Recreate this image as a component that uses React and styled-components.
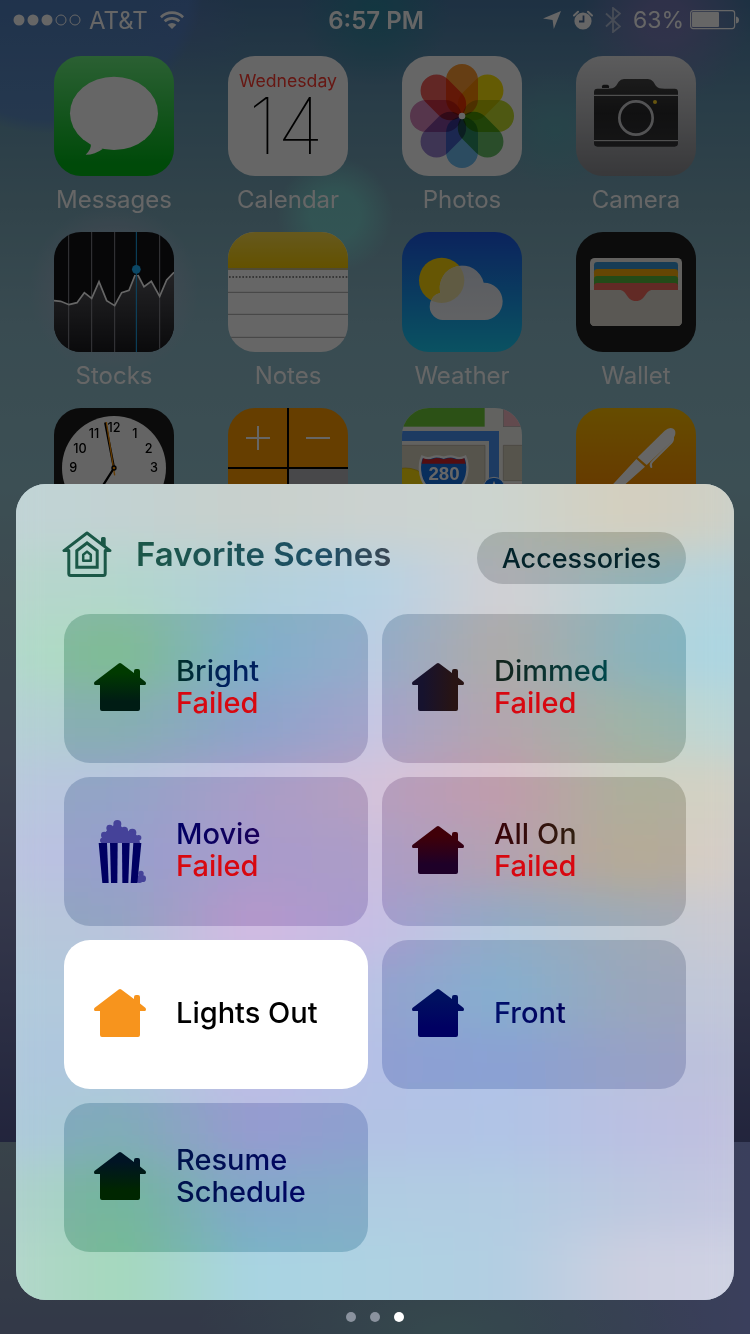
import styled, { createGlobalStyle, css } from "styled-components";

const scenes = [
  {
    name: "Bright",
    failed: true,
    ink: "linear-gradient(90deg, #003028, #00205e 60%)",
    from: "#003a00",
    to: "#001c14",
  },
  {
    name: "Dimmed",
    failed: true,
    ink: "linear-gradient(90deg, #14221a, #00484c)",
    from: "#16122e",
    to: "#281414",
    across: true,
  },
  {
    name: "Movie",
    failed: true,
    icon: "popcorn",
    ink: "linear-gradient(90deg, #000064, #1a005a)",
  },
  {
    name: "All On",
    failed: true,
    ink: "linear-gradient(90deg, #380008, #302010)",
    from: "#400008",
    to: "#1e0028",
  },
  { name: "Lights Out", active: true, from: "#f7941d", to: "#f7941d" },
  {
    name: "Front",
    ink: "linear-gradient(90deg, #00106c, #00005a)",
    from: "#001060",
    to: "#000062",
  },
  {
    name: "Resume Schedule",
    ink: "linear-gradient(90deg, #00144c, #00006a)",
    from: "#001424",
    to: "#002600",
  },
];

// soft colours behind the sheet, one horizontal gradient per line
const glow = [
  "#c0d4d6, #c2d2d2, #c8d0cc, #cbd2d0, #ccd4cf, #d4cfbe, #ccd0c8",
  "#b8d6cc, #b2d6cc, #b2d0da, #b6d2e4, #d2d0d4, #bcd4d8, #b0d4e0",
  "#b0d8cc, #aedcbc, #acd0e4, #bccde4, #d2cecc, #b6d4da, #a8d6e4",
  "#b4d0d4, #b0cfd0, #b2c4e2, #c6c6e4, #d4c8ce, #c6d6cc, #b8d6d8",
  "#b8c8dc, #b8c4e0, #c8bfe0, #d4c2da, #dcc0cc, #d0d2c2, #d4d0c4",
  "#bac2e0, #bac0e2, #c8bee2, #cbbfdf, #d2c4d0, #d6cebe, #d4ccc8",
  "#b6c8da, #b8c4dc, #d2bae2, #c6bee4, #b8cce0, #c2ccd6, #ccc8d0",
  "#b0cadc, #b4c8dc, #c4bce2, #b8c2e4, #b0d0e8, #bec8d8, #c2c6d8",
  "#aec8dc, #aec6de, #bebce4, #b4c0e6, #b0c2e8, #bac2de, #bec0da",
  "#acc8dc, #aaccd4, #b8bce4, #b2c2e4, #b0c4e6, #bac0e2, #c2c0de",
  "#aed0cc, #a2d4c0, #acc8e2, #b0cce2, #b2cce2, #bcc8e0, #c6c6e0",
  "#b4d6cc, #a4d8bc, #a8d4e2, #aed2e2, #b2cee2, #cccfe0, #d0d2e4",
];

export default function App() {
  return (
    <>
      <GlobalStyle />
      <Screen>
        <Home>
          <StatusBar />
          <AppGrid>
            {apps.map(({ label, hideLabel, Icon }) => (
              <AppLink key={label} href="#" aria-label={label}>
                <AppTile>
                  <Icon />
                </AppTile>
                {!hideLabel && <AppLabel>{label}</AppLabel>}
              </AppLink>
            ))}
          </AppGrid>
          <Dock />
        </Home>
        <Overlay>
          <Sheet>
            <Glow>
              {glow.map((colors) => (
                <GlowLine key={colors} $colors={colors} />
              ))}
            </Glow>
            <SheetHeader>
              <SheetTitle>
                <HomeKitIcon />
                <TitleText>Favorite Scenes</TitleText>
              </SheetTitle>
              <Pill type="button">Accessories</Pill>
            </SheetHeader>
            <SceneGrid>
              {scenes.map((scene, i) => (
                <Scene key={scene.name} scene={scene} id={"scene" + i} />
              ))}
            </SceneGrid>
          </Sheet>
          <Pager>
            <PageDot />
            <PageDot />
            <PageDot $current />
          </Pager>
        </Overlay>
      </Screen>
    </>
  );
}

function Scene({ scene, id }) {
  return (
    <SceneButton type="button" $active={scene.active}>
      <SceneIcon>
        {scene.icon === "popcorn" ? (
          <Popcorn />
        ) : (
          <House id={id} from={scene.from} to={scene.to} across={scene.across} />
        )}
      </SceneIcon>
      <SceneText>
        <SceneName $ink={scene.ink}>{scene.name}</SceneName>
        {scene.failed && <SceneError>Failed</SceneError>}
      </SceneText>
    </SceneButton>
  );
}

function House({ id, from, to, across }) {
  return (
    <svg width="52" height="48" viewBox="0 0 52 48">
      <defs>
        <linearGradient id={id} x1="0" y1="0" x2={across ? 1 : 0} y2={across ? 0 : 1}>
          <stop offset="0.2" stopColor={from} />
          <stop offset="0.8" stopColor={to} />
        </linearGradient>
      </defs>
      <path
        fill={`url(#${id})`}
        d="M24.7.6Q26-.4 27.3.6L40 10V8a2 2 0 0 1 2-2h2a2 2 0 0 1 2 2v6.6l5.3 4.2Q52 19.5 52 20.5 52 22 50.5 22H46v24a2 2 0 0 1-2 2H8a2 2 0 0 1-2-2V22H1.5Q0 22 0 20.5 0 19.5.7 18.8Z"
      />
    </svg>
  );
}

function Popcorn() {
  return (
    <svg width="52" height="66" viewBox="102 144 156 198">
      <g fill="#454299">
        <circle cx="172" cy="165" r="12" />
        <circle cx="149" cy="177" r="10" />
        <circle cx="193" cy="184" r="11" />
        <circle cx="217" cy="191" r="12" />
        <circle cx="133" cy="198" r="10" />
        <circle cx="236" cy="206" r="8" />
        <circle cx="128" cy="214" r="8" />
        <path d="M124 222V208l18-26 20-14h18l14 16 26 6 16 14 4 18Z" />
        <circle cx="243" cy="313" r="8" />
        <circle cx="248" cy="329" r="10" />
        <circle cx="238" cy="331" r="11" />
        <path d="M236 316h14v18h-18Z" />
      </g>
      <g fill="#000062">
        <path d="M116 222h25l5 120h-19Z" />
        <path d="M150 222h23l-1 120h-19Z" />
        <path d="M186 222h23l-4 120h-18Z" />
        <path d="M220 222h24l-12 120h-20Z" />
      </g>
    </svg>
  );
}

function HomeKitIcon() {
  return (
    <svg width="50" height="46" viewBox="0 0 50 46" fill="none" stroke="#1b5847" strokeLinejoin="round">
      <path strokeWidth="3" d="M25 2 2 19.6h4.8v22.9a2 2 0 0 0 2 2h32.4a2 2 0 0 0 2-2V19.6H48Z" />
      <path strokeWidth="0" fill="#1b5847" d="M39 12V7.5A1.5 1.5 0 0 1 40.500 6h1.700A1.500 1.500 0 0 1 43.700 7.500V17Z" />
      <path strokeWidth="3" strokeLinejoin="miter" d="M25 12 14.800 19.800v16.500h20.400V19.800Z" />
      <path strokeWidth="2.500" d="M25 20.600 21.200 23.800v6h7.600v-6Z" />
    </svg>
  );
}

function StatusBar() {
  return (
    <Status>
      <StatusSide>
        <svg width="68" height="12" viewBox="0 0 68 12" fill="#fff">
          <circle cx="6" cy="6" r="5.500" />
          <circle cx="20" cy="6" r="5.500" />
          <circle cx="34" cy="6" r="5.500" />
          <circle cx="48" cy="6" r="5" fill="none" stroke="#fff" />
          <circle cx="62" cy="6" r="5" fill="none" stroke="#fff" />
        </svg>
        <Carrier>AT&amp;T</Carrier>
        <svg width="24" height="18" viewBox="0 0 24 18" fill="none" stroke="#fff" strokeWidth="2.700">
          <path d="M.9 6.200a16 16 0 0 1 22.200 0" />
          <path d="M4.700 10.200a10.600 10.600 0 0 1 14.600 0" />
          <path stroke="none" fill="#fff" d="m12 18-4.300-4.300a6.200 6.200 0 0 1 8.600 0Z" />
        </svg>
      </StatusSide>
      <Time>6:57 PM</Time>
      <StatusSide $end>
        <svg width="18" height="18" viewBox="0 0 18 18" fill="#fff">
          <path d="M18 0 10.800 18 9.600 9 0 7.600Z" />
        </svg>
        <svg width="20" height="20" viewBox="0 0 20 20">
          <circle cx="10" cy="11" r="8.600" fill="#fff" />
          <path d="M1 5.500 5 1.800M19 5.500 15 1.800" stroke="#fff" strokeWidth="2" strokeLinecap="round" />
          <path d="M10.500 5.500v6H6" fill="none" stroke="#4a6c98" strokeWidth="1.800" />
        </svg>
        <svg width="16" height="26" viewBox="0 0 16 26" fill="none" stroke="#fff" strokeOpacity="0.5" strokeWidth="1.800">
          <path d="M1 6.500 15 19.500 8 25V1l7 5.500L1 19.500" />
        </svg>
        <Charge>
          63%
          <svg width="49" height="20" viewBox="0 0 49 20">
            <rect x="0.600" y="0.600" width="44" height="18" rx="2.500" fill="none" stroke="#fff" strokeWidth="1.200" />
            <rect x="2" y="2" width="27" height="15" rx="1" fill="#fff" />
            <path d="M46 6.500q3 .5 3 3.500t-3 3.500Z" fill="#fff" />
          </svg>
        </Charge>
      </StatusSide>
    </Status>
  );
}

/* app icons, all drawn on a 360 unit square */

function Messages() {
  return (
    <Art viewBox="0 0 360 360">
      <defs>
        <linearGradient id="messages" x2="0" y2="1">
          <stop offset="0" stopColor="#6cf080" />
          <stop offset="0.9" stopColor="#00b818" />
        </linearGradient>
      </defs>
      <rect width="360" height="360" fill="url(#messages)" />
      <ellipse cx="180" cy="172" rx="132" ry="110" fill="#fff" />
      <path d="M110 262q4 16-15 34 28 0 52-18Z" fill="#fff" />
    </Art>
  );
}

function Calendar() {
  return (
    <Art viewBox="0 0 360 360">
      <rect width="360" height="360" fill="#fff" />
      <ArtText x="180" y="94" $size={53} fill="#ff3b30">
        Wednesday
      </ArtText>
      <ArtText x="174" y="294" $size={234} $weight={100} fill="#000">
        14
      </ArtText>
    </Art>
  );
}

function Photos() {
  const petals = [
    "#ff9c33",
    "#fbe30c",
    "#c3dc2f",
    "#69c06a",
    "#6fbdf2",
    "#9c86d2",
    "#d687bd",
    "#f5615e",
  ];
  return (
    <Art viewBox="0 0 360 360">
      <rect width="360" height="360" fill="#fff" />
      {petals.map((color, i) => (
        <Petal
          key={color}
          x="132"
          y="24"
          width="96"
          height="154"
          rx="48"
          fill={color}
          transform={`rotate(${i * 45} 180 180)`}
        />
      ))}
      <circle cx="180" cy="180" r="10" fill="#fff" />
    </Art>
  );
}

function Camera() {
  return (
    <Art viewBox="0 0 360 360">
      <defs>
        <linearGradient id="camera" x2="0" y2="1">
          <stop offset="0" stopColor="#e6e6e8" />
          <stop offset="1" stopColor="#8c8d92" />
        </linearGradient>
        <linearGradient id="cameraBody" x2="0" y2="1">
          <stop offset="0" stopColor="#444" />
          <stop offset="0.500" stopColor="#2a2a2c" />
          <stop offset="1" stopColor="#363638" />
        </linearGradient>
      </defs>
      <rect width="360" height="360" fill="url(#camera)" />
      <path d="M78 96v-5q0-5 5-5h11q5 0 5 5v5Z" fill="#2c2c2e" />
      <path
        fill="url(#cameraBody)"
        d="M54 262V108q0-10 10-10h30c26 0 27-11 34-21q6-8 16-8h72q10 0 16 8c7 10 8 21 34 21h30q10 0 10 10v154q0 10-10 10H64q-10 0-10-10Z"
      />
      <path d="M54 118h252M54 254h252" stroke="#e4e4e4" strokeWidth="3" />
      <circle cx="180" cy="186" r="50" fill="none" stroke="#cfcfd3" strokeWidth="8" />
      <circle cx="237" cy="138" r="6" fill="#ffd426" />
    </Art>
  );
}

function Stocks() {
  return (
    <Art viewBox="0 0 360 360">
      <defs>
        <linearGradient id="stocks" x2="0" y2="1">
          <stop offset="0" stopColor="#5a5a60" />
          <stop offset="1" stopColor="#1a1a1e" />
        </linearGradient>
      </defs>
      <rect width="360" height="360" fill="#121216" />
      <path
        fill="url(#stocks)"
        d="M0 206l20 2 25 10 24-6 22-30 22 17 22-50 23 57 24 15 21-39 22-7 22-55 23 44 22-16 25 45 21-49 22-23v239H0Z"
      />
      <path d="M44 0v360M113 0v360M182 0v360M317 0v360" stroke="#8e8e96" strokeWidth="3" />
      <path
        fill="none"
        stroke="#fff"
        strokeWidth="5"
        d="M0 206l20 2 25 10 24-6 22-30 22 17 22-50 23 57 24 15 21-39 22-7 22-55 23 44 22-16 25 45 21-49 22-23"
      />
      <circle cx="247" cy="112" r="18" fill="#121216" />
      <path d="M247 0v360" stroke="#1eb4ff" strokeWidth="3" />
      <circle cx="247" cy="112" r="13" fill="#1eb4ff" />
    </Art>
  );
}

function Notes() {
  return (
    <Art viewBox="0 0 360 360">
      <defs>
        <linearGradient id="notes" x2="0" y2="1">
          <stop offset="0" stopColor="#ffde4c" />
          <stop offset="1" stopColor="#f8cb00" />
        </linearGradient>
      </defs>
      <rect width="360" height="360" fill="#fff" />
      <rect width="360" height="108" fill="url(#notes)" />
      <path d="M0 111h360" stroke="#b5a056" strokeWidth="5" />
      <path d="M3 135h357" stroke="#8a8a8a" strokeWidth="6" strokeDasharray="5 5" />
      <path d="M0 181h360M0 247h360M0 316h360" stroke="#a4a4a4" strokeWidth="3" />
    </Art>
  );
}

function Weather() {
  return (
    <Art viewBox="0 0 360 360">
      <defs>
        <linearGradient id="weather" x2="0" y2="1">
          <stop offset="0" stopColor="#1d58e8" />
          <stop offset="1" stopColor="#19cdf4" />
        </linearGradient>
        <linearGradient id="cloud" x2="0" y2="1">
          <stop offset="0" stopColor="#d4dcec" />
          <stop offset="1" stopColor="#fff" />
        </linearGradient>
        <clipPath id="cloudShape">
          <path d="M122 264a41 41 0 0 1-7-81 66 66 0 0 1 130-31 56 56 0 0 1 2 112Z" />
        </clipPath>
      </defs>
      <rect width="360" height="360" fill="url(#weather)" />
      <circle cx="119" cy="145" r="68" fill="#ffd80c" />
      <g clipPath="url(#cloudShape)">
        <rect width="360" height="360" fill="url(#cloud)" />
        <circle cx="119" cy="145" r="68" fill="#f0e4a8" />
      </g>
    </Art>
  );
}

function Wallet() {
  return (
    <Art viewBox="0 0 360 360">
      <rect width="360" height="360" fill="#1e1e1e" />
      <rect x="42" y="78" width="276" height="204" rx="14" fill="#f4f2ee" />
      <rect x="54" y="90" width="252" height="60" rx="10" fill="#3a97d4" />
      <rect x="54" y="111" width="252" height="60" rx="10" fill="#fdae0c" />
      <rect x="54" y="132" width="252" height="60" rx="10" fill="#57bb3c" />
      <rect x="54" y="153" width="252" height="60" rx="10" fill="#f4695e" />
      <path
        fill="#e0dbd3"
        d="M42 174h88c24 0 20 33 50 33s26-33 50-33h88v94q0 14-14 14H56q-14 0-14-14Z"
      />
    </Art>
  );
}

function Clock() {
  return (
    <Art viewBox="0 0 360 360">
      <rect width="360" height="360" fill="#1c1c1c" />
      <circle cx="180" cy="180" r="156" fill="#fafafa" />
      <g fill="#000">
        <ArtText x="180" y="72" $size={38} $weight={500}>12</ArtText>
        <ArtText x="243" y="90" $size={38} $weight={500}>1</ArtText>
        <ArtText x="284" y="135" $size={38} $weight={500}>2</ArtText>
        <ArtText x="300" y="192" $size={38} $weight={500}>3</ArtText>
        <ArtText x="58" y="192" $size={38} $weight={500}>9</ArtText>
        <ArtText x="78" y="135" $size={38} $weight={500}>10</ArtText>
        <ArtText x="120" y="90" $size={38} $weight={500}>11</ArtText>
      </g>
      <path d="M180 180 154 46" stroke="#000" strokeWidth="7" strokeLinecap="round" />
      <path d="M180 180 128 262" stroke="#000" strokeWidth="7" strokeLinecap="round" />
      <path d="M182 202 157 42" stroke="#ff9500" strokeWidth="4" />
      <circle cx="180" cy="180" r="8" fill="#000" />
      <circle cx="180" cy="180" r="4" fill="#ff9500" />
    </Art>
  );
}

function Calculator() {
  return (
    <Art viewBox="0 0 360 360">
      <rect width="360" height="360" fill="#ff9b00" />
      <rect x="180" y="180" width="180" height="180" fill="#b4b5b9" />
      <path d="M180 0v360M0 180h360" stroke="#000" strokeWidth="6" />
      <path d="M54 90h72M90 54v72M234 90h72" stroke="#fff" strokeWidth="6" />
    </Art>
  );
}

function Maps() {
  return (
    <Art viewBox="0 0 360 360">
      <rect width="360" height="360" fill="#f6f5f1" />
      <rect width="248" height="56" fill="#6ecb38" />
      <rect x="304" width="56" height="56" fill="#f4b9c4" stroke="#b4aeae" strokeWidth="2" />
      <path d="M-4 112h253v260H-4Z" fill="#d8d1bd" stroke="#aaa494" strokeWidth="2" />
      <path d="M304 112h60v106h-60Z" fill="#d8d1bd" stroke="#aaa494" strokeWidth="2" />
      <rect x="304" y="226" width="60" height="140" fill="#f2d6d4" />
      <circle cx="10" cy="270" r="90" fill="#ffde0c" stroke="#d4b000" strokeWidth="2" />
      <path d="M0 84h276v276" fill="none" stroke="#4a94f6" strokeWidth="30" />
      <path
        fill="#1473e6"
        stroke="#fff"
        strokeWidth="7"
        d="M60 146q16 8 33 1 10-5 32 2 22-7 32-2 17 7 33-1 8 18 6 42-4 56-71 80-67-24-71-80-2-24 6-42Z"
      />
      <path d="M63 151q16 6 31 1 10-5 31 2 21-7 31-2 15 5 31-1l4 16H59Z" fill="#d0252c" />
      <MapNumber x="126" y="216" fill="#fff">280</MapNumber>
      <circle cx="276" cy="241" r="33" fill="#1473e6" stroke="#fff" strokeWidth="3" />
      <path d="m276 218 16 40-16-8-16 8Z" fill="#fff" />
    </Art>
  );
}

function Pages() {
  return (
    <Art viewBox="0 0 360 360">
      <defs>
        <linearGradient id="pages" x2="0" y2="1">
          <stop offset="0" stopColor="#ffbf00" />
          <stop offset="0.700" stopColor="#ff9000" />
        </linearGradient>
      </defs>
      <rect width="360" height="360" fill="url(#pages)" />
      <path d="M266 68q14-12 26-6 10 7 4 22l-10 17-74 70-27-23Z" fill="#fff" />
      <path d="M181 153 207 176 142 234 90 284 60 292 106 234Z" fill="#fff" />
      <path
        d="M290 84q4 12-5 21l-56 56q-8 8-3 16"
        fill="none"
        stroke="#fff"
        strokeWidth="6"
        strokeLinecap="round"
      />
    </Art>
  );
}

const apps = [
  { label: "Messages", Icon: Messages },
  { label: "Calendar", Icon: Calendar },
  { label: "Photos", Icon: Photos },
  { label: "Camera", Icon: Camera },
  { label: "Stocks", Icon: Stocks },
  { label: "Notes", Icon: Notes },
  { label: "Weather", Icon: Weather },
  { label: "Wallet", Icon: Wallet },
  { label: "Clock", hideLabel: true, Icon: Clock },
  { label: "Calculator", hideLabel: true, Icon: Calculator },
  { label: "Maps", hideLabel: true, Icon: Maps },
  { label: "Pages", hideLabel: true, Icon: Pages },
];

const GlobalStyle = createGlobalStyle`
  * {
    box-sizing: border-box;
  }

  body {
    margin: 0;
    font-family: Inter, "Liberation Sans", sans-serif;
  }

  button {
    font-family: inherit;
    border: 0;
    padding: 0;
    cursor: pointer;
  }

  svg {
    display: block;
    flex-shrink: 0;
  }
`;

const Screen = styled.main`
  display: grid;
  min-height: 100vh;
`;

const Home = styled.section`
  grid-area: 1 / 1;
  position: relative;
  display: flex;
  flex-direction: column;
  background:
    radial-gradient(circle at 50px -20px, rgba(84, 130, 205, 0.6) 140px, transparent 154px),
    radial-gradient(circle at 190px 20px, rgba(96, 120, 190, 0.4), transparent 60px),
    radial-gradient(circle at 375px 10px, rgba(40, 140, 160, 0.8), transparent 75px),
    radial-gradient(circle at 665px 20px, rgba(136, 124, 190, 0.7) 20px, transparent 85px),
    radial-gradient(circle at 555px 130px, rgba(90, 180, 185, 0.6), transparent 60px),
    radial-gradient(circle at 335px 215px, rgba(125, 240, 225, 0.55) 25px, transparent 58px),
    radial-gradient(circle at 114px 290px, rgba(180, 185, 210, 0.4) 60px, transparent 85px),
    linear-gradient(
      #4b7aa6 0,
      #689ab4 110px,
      #7ba8b9 200px,
      #8fbccb 330px,
      #96c6d2 480px,
      #98b8c8 600px,
      #96a8c8 760px,
      #8088b8 920px,
      #565c98 1140px
    );

  &::after {
    content: "";
    position: absolute;
    inset: 0;
    background: rgba(0, 0, 0, 0.6);
  }
`;

const Status = styled.header`
  display: grid;
  grid-template-columns: 1fr auto 1fr;
  align-items: center;
  height: 40px;
  padding: 0 11px 0 13px;
  color: #fff;
  font-size: 24px;
`;

const StatusSide = styled.div`
  display: flex;
  align-items: center;
  justify-content: ${({ $end }) => ($end ? "flex-end" : "flex-start")};
  gap: ${({ $end }) => ($end ? "12px" : "8px")};
`;

const Carrier = styled.span`
  padding-right: 4px;
`;

const Charge = styled.span`
  display: flex;
  align-items: center;
  gap: 6px;
  font-size: 23px;
`;

const Time = styled.time`
  font-weight: 600;
`;

const AppGrid = styled.nav`
  display: grid;
  grid-template-columns: repeat(4, 1fr);
  row-gap: 18px;
  padding: 16px 27px 0;
`;

const AppLink = styled.a`
  display: flex;
  flex-direction: column;
  align-items: center;
  gap: 10px;
  color: #fff;
  text-decoration: none;
`;

const AppTile = styled.span`
  display: block;
  width: 120px;
  height: 120px;
  border-radius: 27px;
  overflow: hidden;
`;

const AppLabel = styled.span`
  font-size: 24px;
  line-height: 28px;
`;

const Art = styled.svg`
  width: 100%;
  height: 100%;
  isolation: isolate;
`;

const ArtText = styled.text`
  font-family: Inter, sans-serif;
  font-size: ${({ $size }) => $size}px;
  font-weight: ${({ $weight }) => $weight || 400};
  text-anchor: middle;
`;

const MapNumber = styled.text`
  font-family: "Liberation Sans", sans-serif;
  font-size: 56px;
  font-weight: 700;
  text-anchor: middle;
`;

const Petal = styled.rect`
  mix-blend-mode: multiply;
`;

const Dock = styled.div`
  height: 192px;
  margin-top: auto;
  background:
    radial-gradient(ellipse at 60% 100%, rgba(135, 200, 200, 0.7), transparent 40%),
    linear-gradient(90deg, transparent 60%, #929fe6 100%),
    linear-gradient(#8ea8b8, #7f8eb4);
`;

const Overlay = styled.div`
  grid-area: 1 / 1;
  align-self: end;
  z-index: 1;
  padding: 0 16px;
`;

const Sheet = styled.section`
  position: relative;
  padding: 48px;
  border-radius: 30px;
  overflow: hidden;
  background: #c0d0d8;
`;

const Glow = styled.div`
  position: absolute;
  inset: 0 -20px;
  display: flex;
  flex-direction: column;
  filter: blur(20px);

  /* keeps the blur from fading out at the rounded edge */
  &::before,
  &::after {
    content: "";
    position: absolute;
    left: 0;
    right: 0;
    height: 60px;
  }

  &::before {
    bottom: 100%;
    background: linear-gradient(90deg, ${glow[0]});
  }

  &::after {
    top: 100%;
    background: linear-gradient(90deg, ${glow[11]});
  }
`;

const GlowLine = styled.div`
  flex: 1;
  background: linear-gradient(90deg, ${({ $colors }) => $colors});
`;

const SheetHeader = styled.header`
  position: relative;
  display: flex;
  justify-content: space-between;
  align-items: center;
  margin-bottom: 30px;
`;

const SheetTitle = styled.div`
  display: flex;
  align-items: center;
  gap: 24px;
  margin: -4px 0 0 -2px;
  padding-bottom: 4px;
`;

const TitleText = styled.h1`
  margin: 0;
  font-size: 33px;
  font-weight: 600;
  line-height: 40px;
  color: transparent;
  background: linear-gradient(90deg, #1c5748, #1d5060 60%, #1f4f66 75%, #3a4652);
  background-clip: text;
`;

const frosted = css`
  background: transparent;
  backdrop-filter: saturate(1.6) brightness(0.83);
`;

const Pill = styled.button`
  ${frosted}
  height: 52px;
  padding: 0 25px;
  border-radius: 26px;
  color: #04242b;
  font-size: 27px;
  font-weight: 500;
`;

const SceneGrid = styled.div`
  position: relative;
  display: grid;
  grid-template-columns: 1fr 1fr;
  gap: 14px;
`;

const SceneButton = styled.button`
  ${frosted}
  display: flex;
  align-items: center;
  gap: 30px;
  min-height: 149px;
  padding: 0 30px 3px;
  border-radius: 26px;
  text-align: left;
  color: #000;

  ${({ $active }) =>
    $active &&
    css`
      background: #fff;
      backdrop-filter: none;
    `}
`;

const SceneIcon = styled.span`
  flex: 0 0 52px;
`;

const SceneText = styled.span`
  display: flex;
  flex-direction: column;
  align-items: flex-start;
  font-size: 29px;
  font-weight: 500;
  line-height: 32px;
`;

const SceneName = styled.span`
  ${({ $ink }) =>
    $ink &&
    css`
      color: transparent;
      background: ${$ink};
      background-clip: text;
    `}
`;

const SceneError = styled.span`
  color: #d80810;
`;

const Pager = styled.div`
  display: flex;
  justify-content: center;
  gap: 14px;
  padding: 12px 0;
`;

const PageDot = styled.span`
  width: 10px;
  height: 10px;
  border-radius: 50%;
  background: ${({ $current }) => ($current ? "#fff" : "#8a929e")};
`;
